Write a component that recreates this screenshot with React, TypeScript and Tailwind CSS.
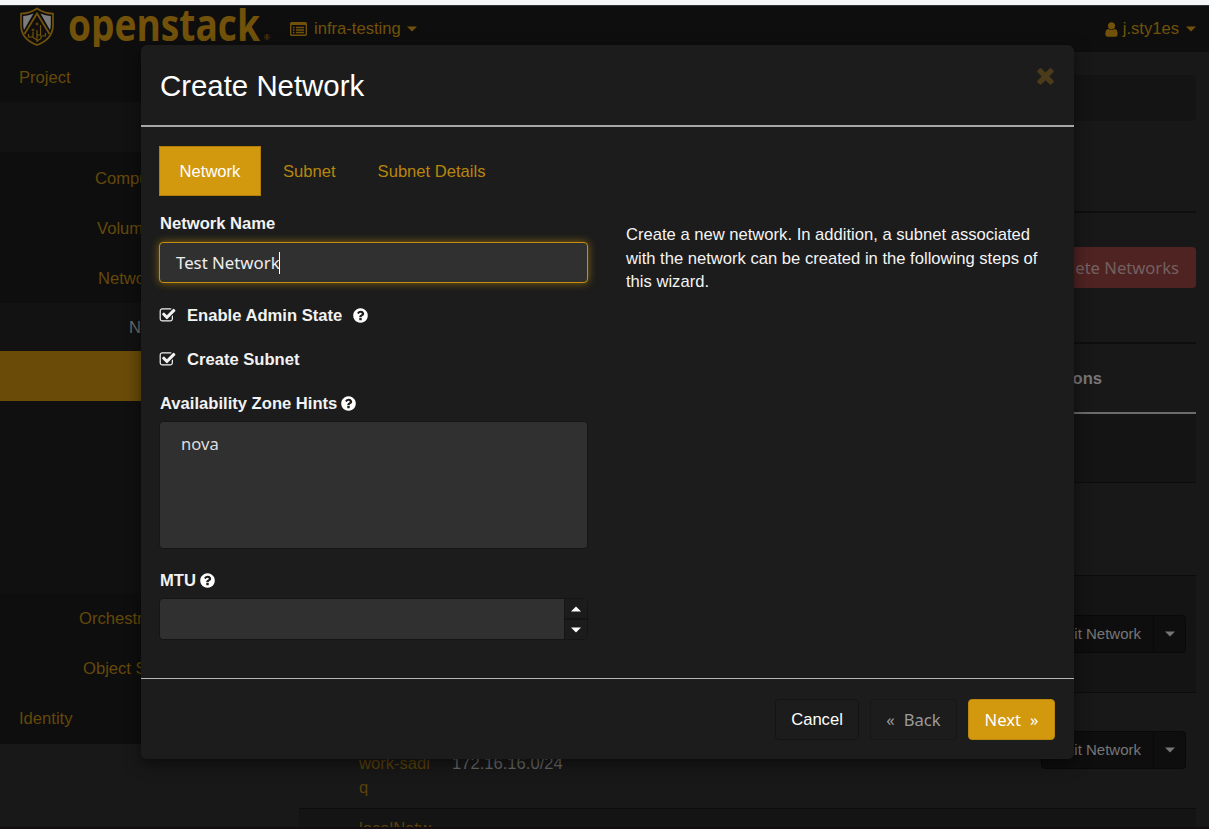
import type { ReactNode } from 'react';

const ICONS = {
  question:
    'M1024 1376v-192q0-14-9-23t-23-9h-192q-14 0-23 9t-9 23v192q0 14 9 23t23 9h192q14 0 23-9t9-23zm256-672q0-88-55.5-163t-138.5-116-170-41q-243 0-371 213-15 24 8 42l132 100q7 6 19 6 16 0 25-12 53-68 86-92 34-24 86-24 48 0 85.5 26t37.5 59q0 38-20 61t-68 45q-63 28-115.5 86.5t-52.5 125.5v36q0 14 9 23t23 9h192q14 0 23-9t9-23q0-19 21.5-49.5t54.5-49.5q32-18 49-28.5t46-35 44.5-48 28-60.5 12.5-81zm384 192q0 209-103 385.5t-279.5 279.5-385.5 103-385.5-103-279.5-279.5-103-385.5 103-385.5 279.5-279.5 385.5-103 385.5 103 279.5 279.5 103 385.5z',
  check:
    'M1472 930v318q0 119-84.5 203.5t-203.5 84.5h-832q-119 0-203.5-84.5t-84.5-203.5v-832q0-119 84.5-203.5t203.5-84.5h832q63 0 117 25 15 7 18 23 3 17-9 29l-49 49q-10 10-23 10-3 0-9-2-23-6-45-6h-832q-66 0-113 47t-47 113v832q0 66 47 113t113 47h832q66 0 113-47t47-113v-254q0-13 9-22l64-64q10-10 23-10 6 0 12 3 20 8 20 29zm231-489l-814 814q-24 24-57 24t-57-24l-430-430q-24-24-24-57t24-57l110-110q24-24 57-24t57 24l263 263 647-647q24-24 57-24t57 24l110 110q24 24 24 57t-24 57z',
  times:
    'M1490 1322q0 40-28 68l-136 136q-28 28-68 28t-68-28l-294-294-294 294q-28 28-68 28t-68-28l-136-136q-28-28-28-68t28-68l294-294-294-294q-28-28-28-68t28-68l136-136q28-28 68-28t68 28l294 294 294-294q28-28 68-28t68 28l136 136q28 28 28 68t-28 68l-294 294 294 294q28 28 28 68z',
  user: 'M1536 1399q0 109-62.5 187t-150.5 78h-854q-88 0-150.5-78t-62.5-187q0-85 8.5-160.5t31.5-152 58.5-131 94-89 134.5-34.5q131 128 313 128t313-128q76 0 134.5 34.5t94 89 58.5 131 31.5 152 8.5 160.5zm-256-887q0 159-112.5 271.5t-271.5 112.5-271.5-112.5-112.5-271.5 112.5-271.5 271.5-112.5 271.5 112.5 112.5 271.5z',
};

function Icon({ name, className }: { name: keyof typeof ICONS; className: string }) {
  return (
    <svg viewBox="0 0 1792 1792" fill="currentColor" className={`shrink-0 ${className}`}>
      <path d={ICONS[name]} />
    </svg>
  );
}

function Caret({ up = false, className = '' }: { up?: boolean; className?: string }) {
  return (
    <svg viewBox="0 0 10 6" fill="currentColor" className={`h-[6px] w-[10px] shrink-0 ${className}`}>
      <path d={up ? 'M0 5.5 5 .5l5 5z' : 'M0 .5h10l-5 5z'} />
    </svg>
  );
}

function Shield() {
  return (
    <svg viewBox="0 0 36 40" className="h-[40px] w-[36px] shrink-0" fill="none">
      <path d="M18 1.500C13 5 7.500 6.500 2 6.700V18c0 9.500 6.500 16.500 16 20 9.500-3.500 16-10.500 16-20V6.700C28.500 6.500 23 5 18 1.500z" stroke="#72520a" strokeWidth="1.700" />
      <path d="M14.500 6.500C11 8 7.500 8.800 4.200 9v9c0 1.800.3 3.500.8 5z" fill="#7d7d7d" />
      <path d="M21.500 6.500C25 8 28.500 8.800 31.800 9v9c0 1.800-.3 3.500-.8 5z" fill="#7d7d7d" />
      <path d="M5.500 27 18 6.500 30.500 27" stroke="#72520a" strokeWidth="1.800" />
      <path d="M18 35V23M18 33l-4-2.500V25M14 30H9.500v-3M18 28h3.500V18M18 34l4-2.500V29h4.500v-3" stroke="#72520a" strokeWidth="1.200" />
      <circle cx="18" cy="17" r="1" stroke="#72520a" />
      <circle cx="14" cy="23" r="1" stroke="#72520a" />
    </svg>
  );
}

function SideItem({ children, className = '' }: { children?: ReactNode; className?: string }) {
  return (
    <div className={`flex h-[50.200px] shrink-0 items-center pt-[3px] whitespace-nowrap ${className}`}>{children}</div>
  );
}

function Sidebar() {
  return (
    <nav className="flex w-[279px] shrink-0 flex-col self-start bg-[#0e0e0e] text-[#65490a]">
      <SideItem className="pl-[19px]">Project</SideItem>
      <SideItem className="bg-[#121212]" />
      <SideItem className="pl-[95px]">Compute</SideItem>
      <SideItem className="pl-[97px]">Volumes</SideItem>
      <SideItem className="pl-[98px]">Network</SideItem>
      <div className="flex h-[48px] items-center bg-[#121212] pt-[4px] pl-[129px] text-[#6c6c6c]">Networks</div>
      <div className="h-[50px] bg-[#6a4c08]" />
      <div className="h-[192px] bg-[#101010]" />
      <SideItem className="pl-[79px]">Orchestration</SideItem>
      <SideItem className="pl-[83px]">Object Store</SideItem>
      <SideItem className="pl-[19px]">Identity</SideItem>
    </nav>
  );
}

function EditButton() {
  return (
    <div className="mr-[10px] flex h-[38px] w-[145px] shrink-0 rounded-[4px] border border-[#090909] bg-[#0e0e0e] text-[15px] text-[#767676]">
      <div className="flex flex-1 items-center justify-end border-r border-[#090909] pr-[12px] whitespace-nowrap">Edit Network</div>
      <div className="flex w-[31px] items-center justify-center">
        <Caret />
      </div>
    </div>
  );
}

function Header() {
  return (
    <header className="flex h-[47px] shrink-0 items-start border-t border-[#303030] bg-[#0e0e0e] text-[#72520a]">
      <div className="mt-[1px] ml-[19px]">
        <Shield />
      </div>
      <div className="mt-[2px] ml-[13px] h-[39px] w-[197px] overflow-hidden">
        <div className="w-[236px] origin-left scale-x-[0.825] font-['Open_Sans',sans-serif] text-[45px] leading-[31px] font-bold">
          openstack
        </div>
      </div>
      <div className="mt-[27px] -ml-px w-[6px] text-[8px] leading-[9px]">®</div>
      <div className="ml-[20px] flex h-[46px] items-center">
        <svg viewBox="0 0 17 14" className="h-[14px] w-[17px]" fill="none" stroke="currentColor">
          <rect x=".7" y=".7" width="15.600" height="12.600" rx="1" strokeWidth="1.400" />
          <path d="M1 2h15" strokeWidth="2" />
          <path d="M3 5.500h1.500M6 5.500h8M3 8h1.500M6 8h8M3 10.500h1.500M6 10.500h8" strokeWidth="1.300" />
        </svg>
        <span className="ml-[7px]">infra-testing</span>
        <Caret className="ml-[6px]" />
      </div>
      <div className="mr-[13px] ml-auto flex h-[46px] items-center">
        <Icon name="user" className="h-[17px] w-[17px]" />
        <span className="ml-[3px]">j.sty1es</span>
        <Caret className="ml-[7px]" />
      </div>
    </header>
  );
}

function Content() {
  return (
    <main className="mr-[13px] ml-[20px] flex flex-1 flex-col">
      <div className="mt-[23px] h-[46px] shrink-0 rounded-[4px] bg-[#141414]" />
      <div className="mt-[90px] h-[2px] shrink-0 bg-[#0e0e0e]" />
      <div className="mt-[34px] flex justify-end">
        <div className="flex h-[41px] w-[180px] items-center justify-end rounded-[4px] bg-[#4f2322] pt-[2px] pr-[17px] font-['Noto_Sans',sans-serif] whitespace-nowrap text-[#746060]">
          Delete Networks
        </div>
      </div>
      <div className="mt-[54px] h-[2px] shrink-0 bg-[#0e0e0e]" />
      <div className="flex h-[68px] shrink-0 items-center justify-end pt-[2px] pr-[94px] font-bold text-[#777]">Actions</div>
      <div className="h-[2px] shrink-0 bg-[#6b6b6b]" />
      <div className="h-[68px] shrink-0 bg-[#141414]" />
      <div className="h-[93px] shrink-0 border-t border-[#0c0c0c]" />
      <div className="flex h-[117px] shrink-0 items-center justify-end border-t border-[#0c0c0c] bg-[#141414]">
        <EditButton />
      </div>
      <div className="flex h-[116px] shrink-0 items-center border-t border-[#0c0c0c] pb-px leading-[24px]">
        <div className="ml-[60px] w-[93px] pt-[3px] text-[#5b420b]">
          inter
          <br />
          nalNet
          <br />
          work-sadi
          <br />q
        </div>
        <div className="flex-1 pt-[3px] text-[#676767]">
          subnet
          <br />
          172.16.16.0/24
        </div>
        <EditButton />
      </div>
      <div className="h-[117px] shrink-0 border-t border-[#0c0c0c] bg-[#141414] pt-[8px] pl-[60px] leading-[24px] text-[#5b420b]">
        localNetw
      </div>
    </main>
  );
}

function Label({ children }: { children: ReactNode }) {
  return <div className="flex h-[24px] items-center pt-[2px] font-bold text-[#f2f2f2]">{children}</div>;
}

function Modal() {
  return (
    <div className="absolute top-[45px] left-[141px] flex h-[714px] w-[933px] flex-col rounded-[6px] bg-[#1c1c1c] shadow-[0_5px_16px_rgba(0,0,0,0.5)]">
      <div className="flex h-[82px] shrink-0 items-start justify-between border-b-2 border-[#a5a8a6] pr-[19px] pl-[19px]">
        <h1 className="mt-[24px] text-[29.400px] leading-[34px] text-white">Create Network</h1>
        <Icon name="times" className="-mr-[3px] mt-[18px] h-[25px] w-[25px] text-[#4b3b1a]" />
      </div>
      <div className="flex flex-1">
        <div className="ml-[18px] w-[429px] pt-[19px]">
          <div className="flex h-[50px] items-center text-[#b8860d]">
            <div className="flex h-[50px] w-[102px] items-center justify-center border border-[#b17e0b] bg-[#d2980e] pt-[2px] text-white">
              Network
            </div>
            <div className="ml-[22px] pt-[2px]">Subnet</div>
            <div className="ml-[42px] pt-[2px]">Subnet Details</div>
          </div>
          <div className="mt-[15px] pl-px">
            <Label>Network Name</Label>
          </div>
          <div className="mt-[7px] flex h-[41px] items-center rounded-[4px] border border-[#c48f0f] bg-[#303030] pl-[16px] font-['Noto_Sans',sans-serif] text-[16.800px] text-[#eee] shadow-[0_0_9px_rgba(210,152,14,0.6)]">
            Test Network
            <span className="-ml-px h-[22px] w-px bg-white" />
          </div>
          <div className="mt-[20px]">
            <Label>
              <Icon name="check" className="-mt-[2px] h-[17px] w-[17px]" />
              <span className="ml-[11px]">Enable Admin State</span>
              <Icon name="question" className="-mt-[2px] ml-[10px] h-[17px] w-[17px] text-white" />
            </Label>
          </div>
          <div className="mt-[20px]">
            <Label>
              <Icon name="check" className="-mt-[2px] h-[17px] w-[17px]" />
              <span className="ml-[11px]">Create Subnet</span>
            </Label>
          </div>
          <div className="mt-[20px] pl-px">
            <Label>
              Availability Zone Hints
              <Icon name="question" className="-mt-[2px] ml-[3px] h-[17px] w-[17px] text-white" />
            </Label>
          </div>
          <div className="mt-[6px] h-[128px] rounded-[4px] border border-[#161616] bg-[#303030] pt-[10px] pl-[21px] font-['Noto_Sans',sans-serif] leading-[23px] text-[#ddd]">
            nova
          </div>
          <div className="mt-[19px] pl-px">
            <Label>
              MTU
              <Icon name="question" className="-mt-[2px] ml-[3px] h-[17px] w-[17px] text-white" />
            </Label>
          </div>
          <div className="mt-[6px] flex h-[42px] overflow-hidden rounded-[4px] border border-[#151515] bg-[#303030]">
            <div className="flex-1" />
            <div className="flex w-[23px] flex-col border-l border-[#151515] bg-[#1c1c1c] text-white">
              <div className="flex flex-1 items-center justify-center border-b-2 border-[#131313]">
                <Caret up />
              </div>
              <div className="flex flex-1 items-center justify-center">
                <Caret />
              </div>
            </div>
          </div>
        </div>
        <p className="mt-[96px] ml-[38px] w-[428px] leading-[23.600px] text-[#f4f4f4]">
          Create a new network. In addition, a subnet associated with the network can be created in the following steps of this wizard.
        </p>
      </div>
      <div className="flex h-[81px] shrink-0 items-start justify-end border-t border-[#b5b5b5] pt-[20px] pr-[19px]">
        <div className="flex h-[41px] w-[84px] items-center justify-center rounded-[4px] border border-[#141414] pt-[2px] text-white">Cancel</div>
        <div className="ml-[11px] flex h-[41px] w-[87px] items-center justify-center rounded-[4px] border border-[#171717] pt-[2px] font-['Noto_Sans',sans-serif] text-[#9b9b9b]">
          «<span className="ml-[9px]">Back</span>
        </div>
        <div className="ml-[11px] flex h-[41px] w-[87px] items-center justify-center rounded-[4px] border border-[#bb870d] bg-[#d2980e] pt-[2px] font-['Noto_Sans',sans-serif] text-white">
          Next<span className="ml-[9px]">»</span>
        </div>
      </div>
    </div>
  );
}

export default function App() {
  return (
    <div className="relative flex h-[829px] w-[1209px] flex-col overflow-hidden bg-[#181818] font-['Liberation_Sans',Arial,sans-serif] text-[16.600px]">
      <div className="h-[5px] shrink-0 bg-[#f5f6f8]" />
      <Header />
      <div className="flex h-[775px] shrink-0 overflow-hidden">
        <Sidebar />
        <Content />
      </div>
      <div className="h-[2px] shrink-0 bg-[#140d11]" />
      <Modal />
    </div>
  );
}
